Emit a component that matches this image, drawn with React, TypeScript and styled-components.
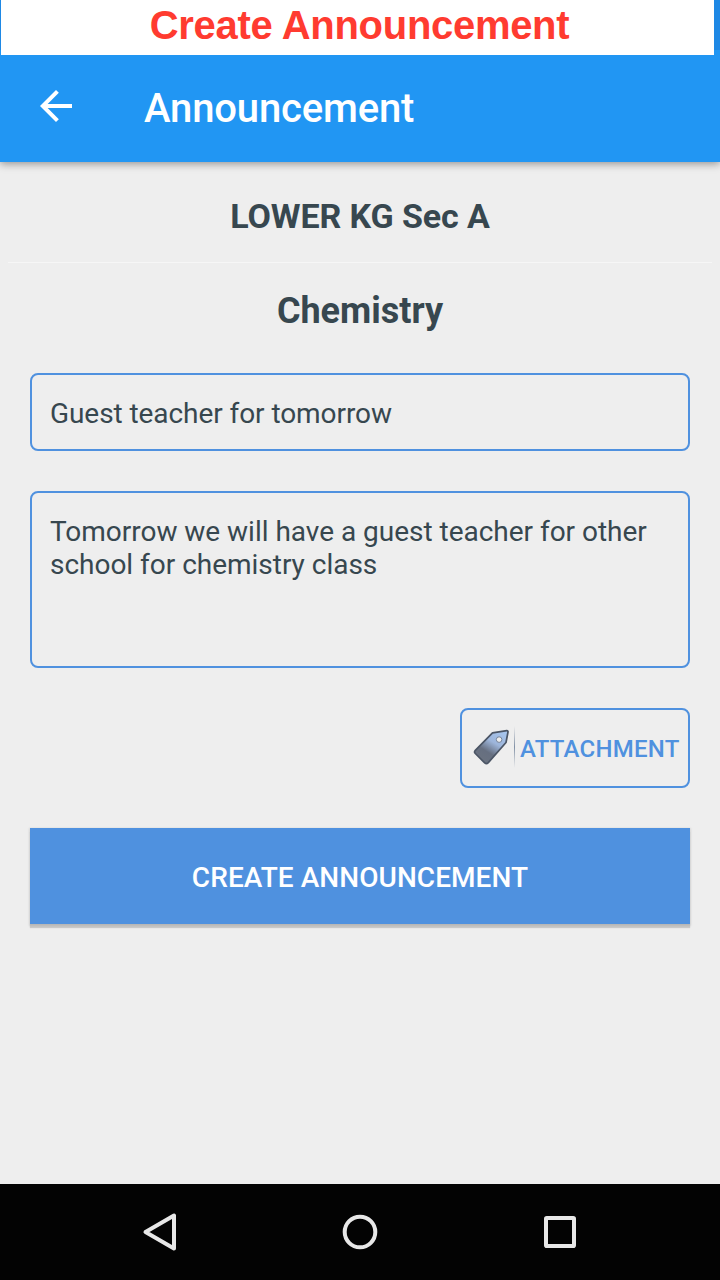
import React from "react";
import styled, { createGlobalStyle } from "styled-components";

const GlobalStyle = createGlobalStyle`
  * { box-sizing: border-box; }
  body { margin: 0; background: #eeeeee; font-family: Roboto, "Noto Sans", sans-serif; }
`;

const Screen = styled.div`
  display: flex;
  flex-direction: column;
  width: 720px;
  height: 1280px;
  background: #eeeeee;
  color: #37474f;
  overflow: hidden;
`;

const Header = styled.header`
  flex: none;
  height: 162px;
  background: linear-gradient(#1e88e5 50px, #2196f3 50px);
  box-shadow: 0 2px 8px rgba(0, 0, 0, 0.38);
`;

const Caption = styled.div`
  height: 55px;
  margin: 0 6px 0 1px;
  background: #ffffff;
  color: #ff3b30;
  font: bold 40px/51px "Liberation Sans", Arial, sans-serif;
  letter-spacing: -0.3px;
  padding-left: 4px;
  text-align: center;
  white-space: nowrap;
`;

const Toolbar = styled.div`
  display: flex;
  align-items: center;
  height: 107px;
  padding: 0 0 5px 32px;
  gap: 64px;
`;

const Title = styled.h1`
  margin: 5px 0 0;
  color: #ffffff;
  font-size: 40px;
  font-weight: 500;
  line-height: 48px;
  letter-spacing: -0.15px;
`;

const Content = styled.main`
  flex: 1;
  display: flex;
  flex-direction: column;
`;

const Heading = styled.h2<{ $height: number; $size: number }>`
  margin: 0 8px;
  height: ${(p) => p.$height}px;
  font-size: ${(p) => p.$size}px;
  font-weight: 700;
  line-height: 42px;
  text-align: center;
`;

const ClassHeading = styled(Heading)`
  padding-top: 33px;
  border-bottom: 1px solid #f6f6f6;
  letter-spacing: -0.1px;
`;

const SubjectHeading = styled(Heading)`
  padding-top: 27px;
`;

const Form = styled.div`
  display: flex;
  flex-direction: column;
  gap: 40px;
  padding: 0 30px;
`;

const Field = styled.div<{ $height: number; $tracking?: number }>`
  height: ${(p) => p.$height}px;
  padding: 22px 18px;
  border: 2px solid #4f91df;
  border-radius: 8px;
  font-size: 28px;
  line-height: 33px;
  letter-spacing: ${(p) => p.$tracking ?? 0}px;
`;

const AttachmentButton = styled.button`
  display: flex;
  align-items: center;
  align-self: flex-end;
  width: 230px;
  height: 80px;
  padding: 0 0 0 10px;
  border: 2px solid #4f91df;
  border-radius: 8px;
  background: transparent;
  color: #4f91df;
  font: 500 24px/28px Roboto, sans-serif;
  letter-spacing: 0.25px;
  white-space: nowrap;
`;

const AttachmentLabel = styled.span`
  padding-top: 2px;
`;

const SubmitButton = styled.button`
  height: 96px;
  border: 0;
  padding: 2px 0 0;
  background: #4f91df;
  color: #ffffff;
  font: 500 28px/33px Roboto, sans-serif;
  letter-spacing: 0.06px;
  box-shadow: 0 4px 1px rgba(0, 0, 0, 0.15), 0 1px 2px 1px rgba(0, 0, 0, 0.1);
`;

const NavBar = styled.nav`
  flex: none;
  display: flex;
  align-items: center;
  justify-content: center;
  gap: 152px;
  height: 96px;
  background: #030303;
`;

const NavIcon = styled.svg`
  width: 48px;
  height: 48px;
  fill: none;
  stroke: #e8e8e8;
  stroke-width: 4;
  stroke-linejoin: round;
`;

const BackArrow = () => (
  <svg width="48" height="48" viewBox="0 0 24 24" fill="#fff">
    <path d="M20 11H7.83l5.59-5.59L12 4l-8 8 8 8 1.41-1.41L7.83 13H20v-2z" />
  </svg>
);

const TagIcon = () => (
  <svg width="48" height="44" viewBox="472 726 48 44">
    <defs>
      <linearGradient id="tag" x1="502" y1="732" x2="484" y2="762" gradientUnits="userSpaceOnUse">
        <stop offset="0" stopColor="#a6c4ec" />
        <stop offset="0.38" stopColor="#9db5da" />
        <stop offset="0.7" stopColor="#666f80" />
        <stop offset="1" stopColor="#6a7280" />
      </linearGradient>
      <linearGradient id="rule" x1="0" y1="726" x2="0" y2="768" gradientUnits="userSpaceOnUse">
        <stop offset="0" stopColor="#8996a8" stopOpacity="0" />
        <stop offset="0.5" stopColor="#8090a5" />
        <stop offset="1" stopColor="#8996a8" stopOpacity="0" />
      </linearGradient>
    </defs>
    <path
      d="M492.5 732.8 506.8 730.7Q508.2 730.6 508 732L506 742.5 488.3 762.6Q486.5 764.4 484.7 762.8L475.3 753.5Q473.8 752 475.3 750.3Z"
      fill="url(#tag)"
      stroke="#4b5565"
      strokeWidth="1.7"
      strokeLinejoin="round"
    />
    <circle cx="499.1" cy="739.6" r="2.8" fill="#eee" stroke="#74839a" strokeWidth="1" />
    <rect x="514" y="726" width="1" height="42" fill="url(#rule)" />
  </svg>
);

export default function App() {
  return (
    <Screen>
      <GlobalStyle />
      <Header>
        <Caption>Create Announcement</Caption>
        <Toolbar>
          <BackArrow />
          <Title>Announcement</Title>
        </Toolbar>
      </Header>
      <Content>
        <ClassHeading $height={101} $size={34}>LOWER KG Sec A</ClassHeading>
        <SubjectHeading $height={110} $size={36}>Chemistry</SubjectHeading>
        <Form>
          <Field $height={78} $tracking={-0.07}>Guest teacher for tomorrow</Field>
          <Field $height={177} $tracking={-0.02}>
            Tomorrow we will have a guest teacher for other school for chemistry class
          </Field>
          <AttachmentButton>
            <TagIcon />
            <AttachmentLabel>ATTACHMENT</AttachmentLabel>
          </AttachmentButton>
          <SubmitButton>CREATE ANNOUNCEMENT</SubmitButton>
        </Form>
      </Content>
      <NavBar>
        <NavIcon viewBox="136 1208 48 48">
          <path d="M174 1215.5V1248.5L145.5 1232Z" />
        </NavIcon>
        <NavIcon viewBox="336 1208 48 48">
          <circle cx="360" cy="1232" r="15.3" />
        </NavIcon>
        <NavIcon viewBox="536 1208 48 48">
          <rect x="546" y="1218" width="28" height="28" rx="0.8" />
        </NavIcon>
      </NavBar>
    </Screen>
  );
}
